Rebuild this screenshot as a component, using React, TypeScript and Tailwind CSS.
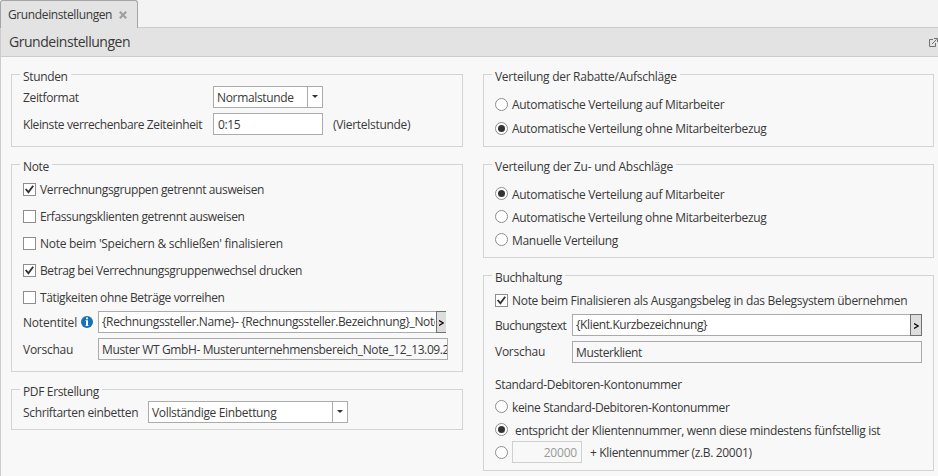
import type { ReactNode } from 'react';

function Group({ title, className = '', track = '', children }: { title: string; className?: string; track?: string; children: ReactNode }) {
  return (
    <section className={`border border-[#d3d3d3] pl-[11px] ${className}`}>
      <h2 className={`-mt-[8px] -ml-[3px] h-[17px] w-fit bg-[#f8f8f8] px-[3px] pt-px leading-[17px] ${track}`}>{title}</h2>
      {children}
    </section>
  );
}

function CheckRow({ label, checked = false, track = 'tracking-[-0.38px]' }: { label: string; checked?: boolean; track?: string }) {
  return (
    <label className="flex h-[27px] items-center gap-[4px]">
      <span className="size-[13px] shrink-0 border border-[#8e8e8e] bg-white">
        {checked && (
          <svg width="11" height="11" viewBox="0 0 11 11" fill="none" stroke="#333" strokeWidth="1.9">
            <path d="M1.7 5 L4.4 8.3 L9.2 1.7" />
          </svg>
        )}
      </span>
      <span className={`pt-px ${track}`}>{label}</span>
    </label>
  );
}

function Radio({ checked = false }: { checked?: boolean }) {
  return (
    <svg className="shrink-0" width="13" height="13" viewBox="0 0 13 13">
      <circle cx="6.5" cy="6.5" r="6" fill="#fff" stroke="#8e8e8e" />
      {checked && <circle cx="6.5" cy="6.5" r="3.5" fill="#333" />}
    </svg>
  );
}

function RadioRow({ label, checked, className = 'h-[23px]', track = 'tracking-[-0.31px]' }: { label: string; checked?: boolean; className?: string; track?: string }) {
  return (
    <label className={`flex items-center gap-[4px] ${className}`}>
      <Radio checked={checked} />
      <span className={`pt-[2px] ${track}`}>{label}</span>
    </label>
  );
}

function Select({ value, className }: { value: string; className: string }) {
  return (
    <div className={`flex h-[22px] border border-[#ababab] bg-white ${className}`}>
      <span className="flex-1 pl-[3px] pt-[2px] leading-[18px] tracking-[-0.34px]">{value}</span>
      <span className="flex w-[15px] items-center justify-center border-l border-[#ababab] pb-px">
        <svg width="6" height="3" viewBox="0 0 6 3" fill="#333">
          <path d="M0 0H6L3 3Z" />
        </svg>
      </span>
    </div>
  );
}

function Expression({ value, className, cut = false }: { value: string; className: string; cut?: boolean }) {
  return (
    <div className={`flex h-[22px] ${className}`}>
      <div className="min-w-0 flex-1 border border-r-0 border-[#ababab] bg-white pl-[3px] pr-[1px]">
        <div className="overflow-hidden whitespace-nowrap pt-px leading-[18px] tracking-[-0.38px]">{value}</div>
      </div>
      <div className={`flex shrink-0 items-center justify-center border border-[#707070] bg-[#dddddd] pt-[2px] ${cut ? 'w-[10px] border-r-0' : 'w-[12px]'}`}>
        <svg width="5" height="6" viewBox="0 0 5 6" fill="none" stroke="#000" strokeWidth="1.2">
          <path d="M0 0.6L4.2 3L0 5.4" />
        </svg>
      </div>
    </div>
  );
}

function Preview({ value, className = 'pt-px' }: { value: string; className?: string }) {
  return (
    <div className={`h-[22px] w-[350px] overflow-hidden whitespace-nowrap border border-[#ababab] pl-[3px] leading-[19px] tracking-[-0.38px] ${className}`}>
      {value}
    </div>
  );
}

export default function App() {
  return (
    <div className="flex h-[476px] w-[938px] flex-col overflow-hidden bg-[#f3f3f3] font-['Open_Sans','Noto_Sans',sans-serif] text-[12px] tracking-[-0.35px] whitespace-nowrap text-[#383838]">
      <div className="flex h-[28px] shrink-0">
        <div className="flex w-[138px] items-center rounded-t-[3px] border border-b-0 border-[#a5a5a5] bg-[#e3e3e3] pl-[7px] pt-px">
          <span className="w-[111px] tracking-[-0.38px]">Grundeinstellungen</span>
          <svg width="8" height="8" viewBox="0 0 8 8" stroke="#a0a0a0" strokeWidth="2.2">
            <path d="M0.8 0.8L7.2 7.2M7.2 0.8L0.8 7.2" />
          </svg>
        </div>
        <div className="flex-1 border-b border-[#cccccc]" />
      </div>
      <div className="flex min-h-0 flex-1 flex-col border-l border-[#cccccc] bg-[#f8f8f8]">
        <header className="flex h-[29px] shrink-0 items-center justify-between border-b border-[#cccccc] bg-[#e3e3e3] pl-[8px]">
          <h1 className="pb-[2px] text-[14px] tracking-[-0.46px]">Grundeinstellungen</h1>
          <svg width="9" height="9" viewBox="0 0 9 9" fill="none" stroke="#707070">
            <path d="M4 1.5H0.5V8.5H6.5V5M3 6L7.5 1.5M5 0.5H8.5V4" />
          </svg>
        </header>
        <main className="flex gap-[20px] pl-[10px] pt-[17px]">
          <div className="flex w-[452px] flex-col gap-[17px]">
            <Group title="Stunden" className="h-[73px]">
              <div className="mt-[2px] flex h-[22px] items-center">
                <span className="w-[190px] pt-[2px]">Zeitformat</span>
                <Select value="Normalstunde" className="w-[110px]" />
              </div>
              <div className="mt-[5px] flex h-[22px] items-center">
                <span className="w-[190px] pt-[2px] tracking-[-0.38px]">Kleinste verrechenbare Zeiteinheit</span>
                <div className="h-[22px] w-[110px] border border-[#ababab] bg-white pl-[4px] pt-[2px] leading-[18px]">0:15</div>
                <span className="pl-[10px] pt-[2px] tracking-[-0.3px]">(Viertelstunde)</span>
              </div>
            </Group>
            <Group title="Note" className="h-[208px]">
              <div className="mt-[2px]">
                <CheckRow label="Verrechnungsgruppen getrennt ausweisen" checked />
                <CheckRow label="Erfassungsklienten getrennt ausweisen" />
                <CheckRow label="Note beim 'Speichern &amp; schließen' finalisieren" track="tracking-[-0.28px]" />
                <CheckRow label="Betrag bei Verrechnungsgruppenwechsel drucken" checked />
                <CheckRow label="Tätigkeiten ohne Beträge vorreihen" />
              </div>
              <div className="flex h-[22px] items-center">
                <span className="w-[58px] pt-[2px] tracking-[-0.2px]">Notentitel</span>
                <svg className="mr-[5px] shrink-0" width="12" height="12" viewBox="0 0 12 12">
                  <circle cx="6" cy="6" r="6" fill="#1771b8" />
                  <path d="M5 1.5H7V3.3H5ZM4.5 4.3H7V9.2H7.5V10H4.5V9.2H5V5.1H4.5Z" fill="#fff" />
                </svg>
                <Expression value="{Rechnungssteller.Name}- {Rechnungssteller.Bezeichnung}_Note_{Nummer}" className="w-[348px]" cut />
              </div>
              <div className="mt-[5px] flex h-[22px] items-center">
                <span className="w-[75px] pt-[2px] tracking-[-0.25px]">Vorschau</span>
                <Preview value="Muster WT GmbH- Musterunternehmensbereich_Note_12_13.09.2023" className="pt-px" />
              </div>
            </Group>
            <Group title="PDF Erstellung" className="h-[41px]">
              <div className="mt-[2px] flex h-[22px] items-center">
                <span className="w-[125px] pt-[2px]">Schriftarten einbetten</span>
                <Select value="Vollständige Einbettung" className="w-[200px]" />
              </div>
            </Group>
          </div>
          <div className="flex w-[451px] flex-col gap-[17px]">
            <Group title="Verteilung der Rabatte/Aufschläge" className="h-[73px]" track="tracking-[-0.28px]">
              <div className="pt-[8px]">
                <RadioRow label="Automatische Verteilung auf Mitarbeiter" className="h-[24px]" />
                <RadioRow label="Automatische Verteilung ohne Mitarbeiterbezug" className="h-[24px]" checked />
              </div>
            </Group>
            <Group title="Verteilung der Zu- und Abschläge" className="h-[94px]" track="tracking-[-0.23px]">
              <div className="pt-[8px]">
                <RadioRow label="Automatische Verteilung auf Mitarbeiter" checked />
                <RadioRow label="Automatische Verteilung ohne Mitarbeiterbezug" />
                <RadioRow label="Manuelle Verteilung" />
              </div>
            </Group>
            <Group title="Buchhaltung" className="h-[196px]">
              <div className="pt-[2px]">
                <CheckRow label="Note beim Finalisieren als Ausgangsbeleg in das Belegsystem übernehmen" checked track="tracking-[-0.31px]" />
              </div>
              <div className="flex h-[22px] items-center">
                <span className="w-[77px] pt-[2px] tracking-[-0.45px]">Buchungstext</span>
                <Expression value="{Klient.Kurzbezeichnung}" className="w-[350px]" />
              </div>
              <div className="mt-[5px] flex h-[22px] items-center">
                <span className="w-[77px] pb-[1px] tracking-[-0.25px]">Vorschau</span>
                <Preview value="Musterklient" className="pt-px" />
              </div>
              <div className="mt-[13px] h-[19px] leading-[18px]">Standard-Debitoren-Kontonummer</div>
              <RadioRow label="keine Standard-Debitoren-Kontonummer" track="tracking-[-0.36px]" />
              <RadioRow label="entspricht der Klientennummer, wenn diese mindestens fünfstellig ist" checked track="pl-[3px] tracking-[-0.35px]" />
              <div className="flex h-[22px] items-center">
                <Radio />
                <div className="ml-[4px] h-[22px] w-[70px] border border-[#d0d0d0] pr-[4px] pt-[2px] text-right leading-[18px] tracking-[-0.2px] text-[#999]">20000</div>
                <span className="pl-[8px] pt-px">+ Klientennummer (z.B. 20001)</span>
              </div>
            </Group>
          </div>
        </main>
      </div>
    </div>
  );
}
